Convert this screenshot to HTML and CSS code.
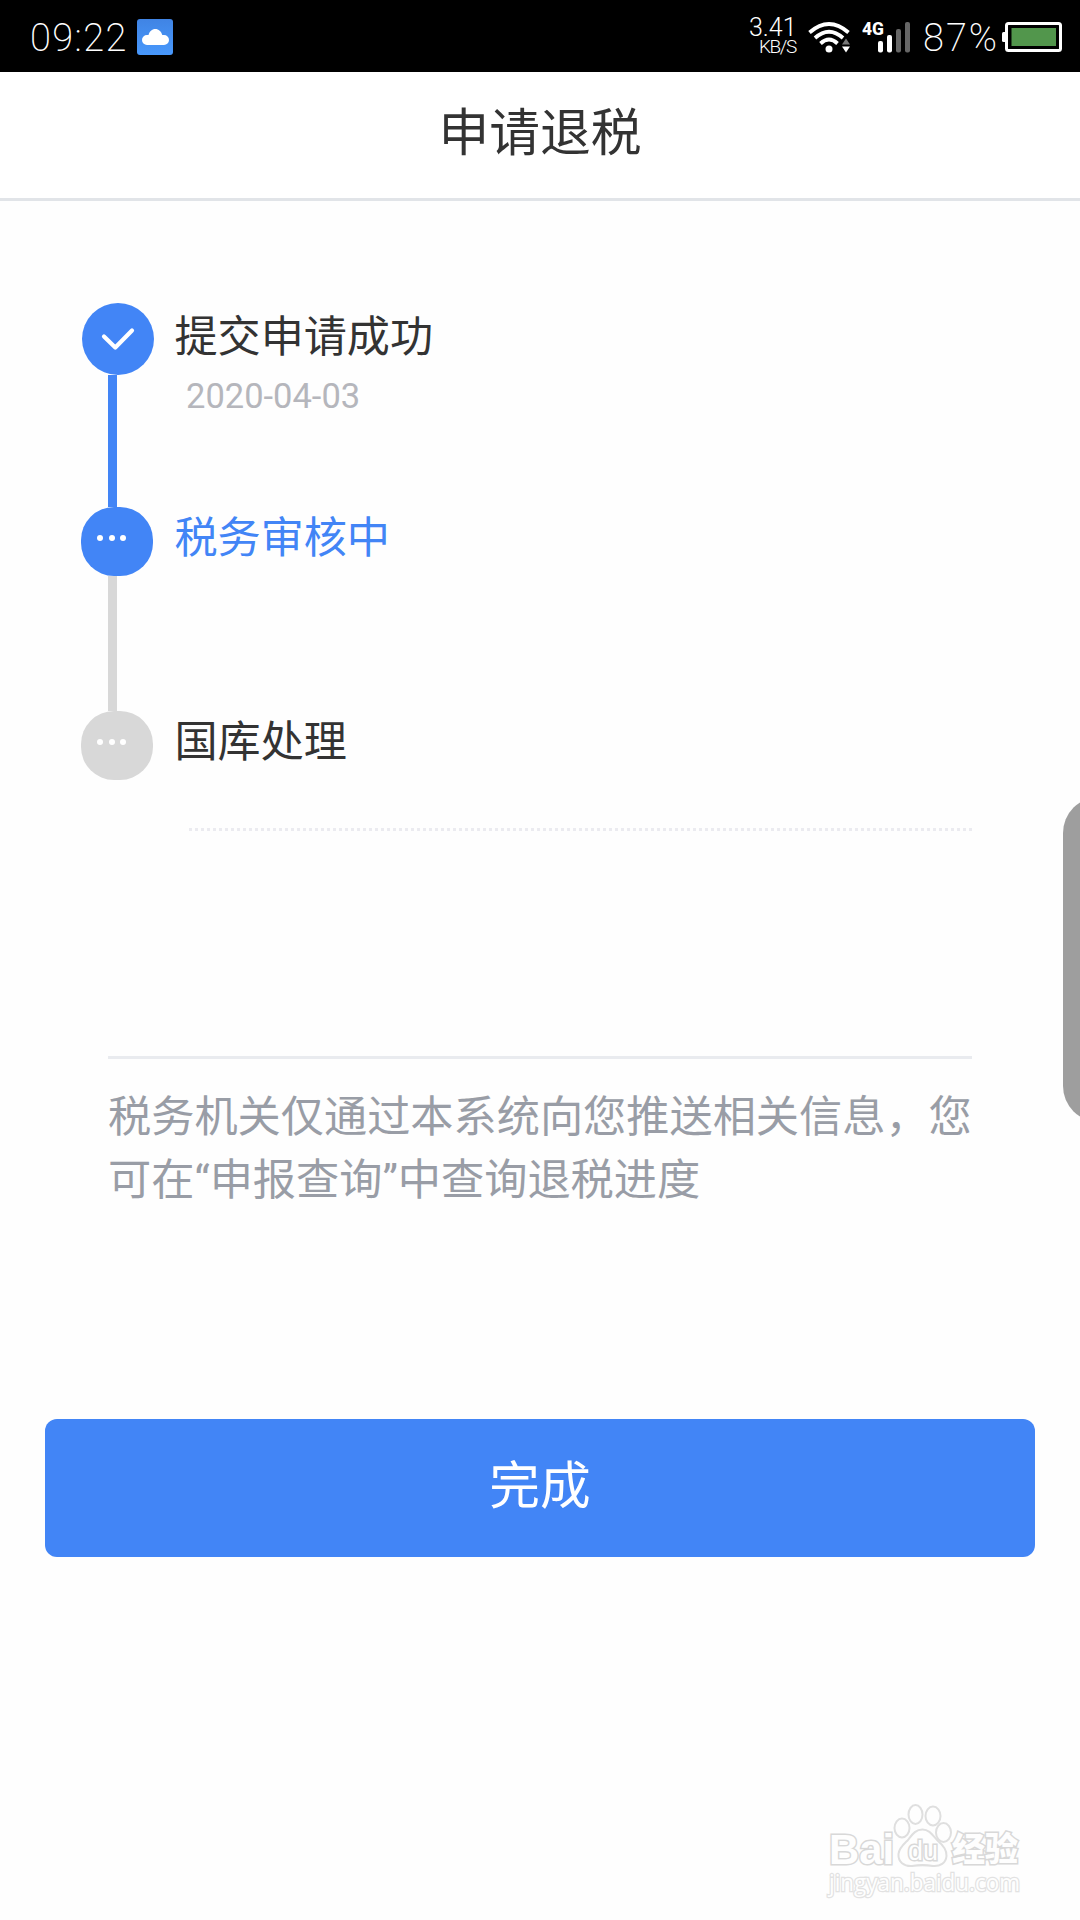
FILE: index.html
```html
<!DOCTYPE html>
<html lang="zh-CN">
<head>
  <meta charset="UTF-8">
  <meta name="viewport" content="width=device-width, initial-scale=1.0">
  <title>申请退税</title>
  <link rel="stylesheet" href="styles.css">
</head>
<body>
  <div class="status-bar">
    <span class="clock">09:22</span>
    <svg class="cloud" width="36" height="36" viewBox="0 0 36 36">
      <defs>
        <linearGradient id="cloud-bg" x1="0" y1="0" x2="0" y2="1">
          <stop offset="0" stop-color="#4084e4"/>
          <stop offset="1" stop-color="#4898fc"/>
        </linearGradient>
      </defs>
      <rect width="36" height="36" rx="3" fill="url(#cloud-bg)"/>
      <path d="M10 26a5 5 0 0 1 0-10h1.500C12.500 12.500 15 10 18.300 10s6 2.500 7 6H27a5 5 0 0 1 0 10z" fill="#fff"/>
    </svg>
    <div class="speed">
      <span class="speed-number">3.41</span>
      <span class="speed-unit">KB/S</span>
    </div>
    <svg class="wifi" width="43" height="32" viewBox="0 0 43 32">
      <g fill="none" stroke="#fff" stroke-width="3.800">
        <path d="M1.500 10.500Q21 -6.500 40.500 10.500"/>
        <path d="M7 16Q21 3.500 35 16"/>
        <path d="M12.500 21.500Q21 13.500 29.500 21.500"/>
      </g>
      <circle cx="21" cy="27" r="3.500" fill="#fff"/>
      <path d="M34 22.500l4-6 4 6z" fill="#777"/>
      <path d="M34 24.500h8l-4 6z" fill="#fff"/>
    </svg>
    <svg class="signal" width="50" height="36" viewBox="0 -4 50 36">
      <text class="network" x="0" y="13" textLength="22" lengthAdjust="spacingAndGlyphs">4G</text>
      <rect x="16" y="19" width="5" height="11.500" rx="2" fill="#fff"/>
      <rect x="25" y="13" width="5" height="17.500" rx="2" fill="#fff"/>
      <rect x="34" y="7" width="5" height="23.500" rx="2" fill="#666"/>
      <rect x="43" y="0" width="5" height="30.500" rx="2" fill="#666"/>
    </svg>
    <span class="percent">87%</span>
    <svg class="battery" width="60" height="30" viewBox="0 0 60 30">
      <rect x="0" y="10" width="5" height="10" rx="1.500" fill="#fff"/>
      <rect x="4.500" y="1.500" width="54" height="27" rx="2" fill="none" stroke="#fff" stroke-width="3"/>
      <rect x="9.500" y="6" width="44.500" height="18" fill="#52964c"/>
    </svg>
  </div>

  <h1 class="header">申请退税</h1>

  <div class="steps">
    <div class="step done">
      <div class="marker">
        <div class="dot">
          <svg width="72" height="72" viewBox="0 0 72 72">
            <path d="M22 33.500L33.300 44.500L50 27.500" fill="none" stroke="#fff" stroke-width="4.200" stroke-linecap="round" stroke-linejoin="round"/>
          </svg>
        </div>
        <div class="line"></div>
      </div>
      <div class="step-text">
        <div class="label">提交申请成功</div>
        <div class="date">2020-04-03</div>
      </div>
    </div>
    <div class="step active">
      <div class="marker">
        <div class="dot"><i></i><i></i><i></i></div>
        <div class="line"></div>
      </div>
      <div class="step-text">
        <div class="label">税务审核中</div>
      </div>
    </div>
    <div class="step last">
      <div class="marker">
        <div class="dot"><i></i><i></i><i></i></div>
      </div>
      <div class="step-text">
        <div class="label">国库处理</div>
      </div>
    </div>
  </div>

  <p class="note">税务机关仅通过本系统向您推送相关信息，您可在“申报查询”中查询退税进度</p>

  <button class="finish">完成</button>

  <svg class="side-handle" width="17" height="325" viewBox="0 0 17 325">
    <rect width="72" height="325" rx="36" fill="#9e9e9e"/>
  </svg>

  <svg class="watermark" width="210" height="110" viewBox="0 0 210 110">
    <g class="mark">
      <ellipse cx="82" cy="28" rx="7.500" ry="9.500"/>
      <ellipse cx="95.500" cy="14.500" rx="7" ry="9.500"/>
      <ellipse cx="113" cy="16" rx="7.500" ry="9.500"/>
      <ellipse cx="123.500" cy="32.500" rx="7.500" ry="9.500"/>
      <path d="M102.500 29.500C110 29.500 113 36 118 41C124 46 127 50 126.500 56C126 63 120 66.500 113 66C107 65 98 65 92 66C84 66.500 78 62 78.500 54C79 48 84 44 88 40C92 35 95 29.500 102.500 29.500z"/>
      <text class="mark-logo" x="9" y="63.500" textLength="65" lengthAdjust="spacingAndGlyphs">Bai</text>
      <text class="mark-du" x="88" y="60" textLength="30" lengthAdjust="spacingAndGlyphs">du</text>
      <text class="mark-cn" x="132" y="61" textLength="66" lengthAdjust="spacingAndGlyphs">经验</text>
      <text class="mark-url" x="9" y="90.500" textLength="191" lengthAdjust="spacingAndGlyphs">jingyan.baidu.com</text>
    </g>
  </svg>
</body>
</html>
```
FILE: styles.css
```css
* {
  box-sizing: border-box;
}

body {
  position: relative;
  width: 1080px;
  height: 1920px;
  margin: 0;
  overflow: hidden;
  background: #fefefe;
  color: #333;
  font-family: "Noto Sans CJK SC", sans-serif;
}

svg {
  display: block;
}

/* status bar */
.status-bar {
  display: flex;
  align-items: flex-start;
  height: 72px;
  padding-left: 30px;
  background: #000;
  color: #fff;
  font-family: Roboto, sans-serif;
  font-weight: 200;
}

.clock {
  width: 107px;
  font-size: 38px;
  line-height: 76px;
  letter-spacing: 1.4px;
}

.cloud {
  margin-top: 19px;
}

.speed {
  display: flex;
  flex-direction: column;
  width: 60px;
  margin-left: 575px;
  padding-top: 13px;
  font-weight: 300;
}

.speed-number {
  padding-left: 1px;
  font-size: 25px;
  line-height: 29px;
}

.speed-unit {
  padding-left: 11px;
  font-size: 19px;
  line-height: 9px;
  letter-spacing: -1.4px;
}

.wifi {
  margin-top: 22px;
}

.signal {
  margin: 18px 0 0 11px;
}

.network {
  fill: #fff;
  font: 800 17.5px Roboto, sans-serif;
}

.percent {
  width: 79px;
  margin-left: 11px;
  font-size: 38px;
  line-height: 76px;
  letter-spacing: 2px;
}

.battery {
  margin-top: 22px;
}

/* page title */
.header {
  height: 129px;
  margin: 0;
  border-bottom: 3px solid #e1e4e8;
  background: #fff;
  font-size: 50.7px;
  font-weight: 400;
  line-height: 114px;
  text-align: center;
}

/* progress steps */
.steps {
  padding: 102px 108px 0 81px;
}

.step {
  display: flex;
  height: 204px;
}

.marker {
  display: flex;
  flex-direction: column;
  width: 72px;
}

.dot {
  display: flex;
  gap: 5.5px;
  width: 72px;
  height: 69px;
  padding: 28px 0 0 16px;
  border-radius: 33px;
  background: #d8d8d8;
}

.dot i {
  width: 6px;
  height: 6px;
  border-radius: 50%;
  background: #fff;
}

.line {
  flex: 1;
  width: 9px;
  margin-left: 27px;
  background: #d8d8d8;
}

.label {
  padding-left: 21.5px;
  font-size: 43.1px;
  line-height: 54px;
}

.done .dot {
  height: 72px;
  margin-left: 1px;
  padding: 0;
  border-radius: 50%;
}

.done .dot,
.done .line,
.active .dot {
  background: #4285f6;
}

.done .label {
  line-height: 60px;
}

.active .label {
  color: #4285f6;
}

.date {
  padding-left: 33px;
  color: #b5b6bc;
  font-family: Roboto, sans-serif;
  font-size: 34.5px;
  line-height: 66px;
}

.last {
  height: 120px;
}

.last .step-text {
  flex: 1;
  margin-left: 36px;
  /* 3px squares with 3px gaps */
  background: repeating-linear-gradient(90deg, #ebebf0 0 3px, transparent 3px 6px) left bottom / 100% 3px no-repeat;
}

.last .label {
  margin-left: -36px;
}

.note {
  margin: 225px 108px 0;
  padding-top: 27px;
  border-top: 3px solid #e9ebef;
  color: #999da6;
  font-family: Roboto, "Noto Sans CJK SC", sans-serif;
  font-size: 43.2px;
  line-height: 63px;
}

.finish {
  display: block;
  width: 990px;
  height: 138px;
  margin: 207px auto 0;
  padding: 0 0 12px;
  border: 0;
  border-radius: 12px;
  background: #4285f6;
  color: #fff;
  font: 50.7px/126px "Noto Sans CJK SC", sans-serif;
}

/* floating handle on the screen edge */
.side-handle {
  position: absolute;
  top: 797px;
  right: 0;
}

.watermark {
  position: absolute;
  top: 1800px;
  left: 820px;
}

.mark {
  fill: #fefefe;
  stroke: #d8d8d8;
  stroke-width: 2px;
  paint-order: stroke;
}

.mark ellipse,
.mark path {
  paint-order: normal;
  stroke: #dfdfdf;
}

.mark-logo {
  font: 700 43px "Liberation Sans", sans-serif;
  stroke-width: 3px;
}

.mark-du {
  font: 400 27px "Liberation Sans", sans-serif;
  stroke-width: 3px;
}

.mark-cn {
  font: 900 33px "Noto Sans CJK SC", sans-serif;
  stroke-width: 3px;
}

.mark-url {
  font: 400 23px "Open Sans", sans-serif;
  stroke-width: 2.5px;
  stroke: #e2e2e2;
}
```
